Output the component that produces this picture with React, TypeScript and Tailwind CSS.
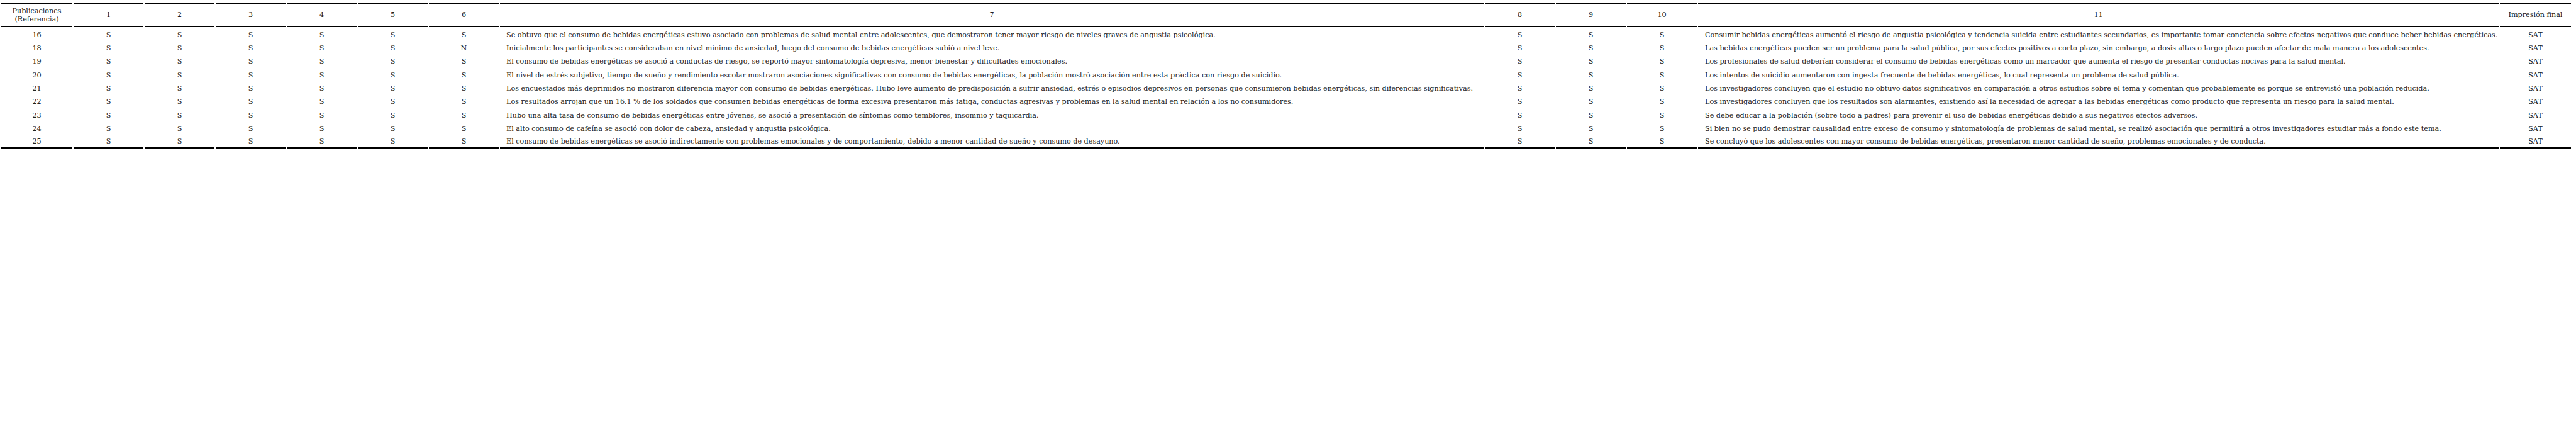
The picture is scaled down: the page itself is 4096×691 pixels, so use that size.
const rows = [
  {
    ref: '16',
    marks: ['S', 'S', 'S', 'S', 'S', 'S'],
    result: 'Se obtuvo que el consumo de bebidas energéticas estuvo asociado con problemas de salud mental entre adolescentes, que demostraron tener mayor riesgo de niveles graves de angustia psicológica.',
    tail: ['S', 'S', 'S'],
    conclusion: 'Consumir bebidas energéticas aumentó el riesgo de angustia psicológica y tendencia suicida entre estudiantes secundarios, es importante tomar conciencia sobre efectos negativos que conduce beber bebidas energéticas.',
  },
  {
    ref: '18',
    marks: ['S', 'S', 'S', 'S', 'S', 'N'],
    result: 'Inicialmente los participantes se consideraban en nivel mínimo de ansiedad, luego del consumo de bebidas energéticas subió a nivel leve.',
    tail: ['S', 'S', 'S'],
    conclusion: 'Las bebidas energéticas pueden ser un problema para la salud pública, por sus efectos positivos a corto plazo, sin embargo, a dosis altas o largo plazo pueden afectar de mala manera a los adolescentes.',
  },
  {
    ref: '19',
    marks: ['S', 'S', 'S', 'S', 'S', 'S'],
    result: 'El consumo de bebidas energéticas se asoció a conductas de riesgo, se reportó mayor sintomatología depresiva, menor bienestar y dificultades emocionales.',
    tail: ['S', 'S', 'S'],
    conclusion: 'Los profesionales de salud deberían considerar el consumo de bebidas energéticas como un marcador que aumenta el riesgo de presentar conductas nocivas para la salud mental.',
  },
  {
    ref: '20',
    marks: ['S', 'S', 'S', 'S', 'S', 'S'],
    result: 'El nivel de estrés subjetivo, tiempo de sueño y rendimiento escolar mostraron asociaciones significativas con consumo de bebidas energéticas, la población mostró asociación entre esta práctica con riesgo de suicidio.',
    tail: ['S', 'S', 'S'],
    conclusion: 'Los intentos de suicidio aumentaron con ingesta frecuente de bebidas energéticas, lo cual representa un problema de salud pública.',
  },
  {
    ref: '21',
    marks: ['S', 'S', 'S', 'S', 'S', 'S'],
    result: 'Los encuestados más deprimidos no mostraron diferencia mayor con consumo de bebidas energéticas. Hubo leve aumento de predisposición a sufrir ansiedad, estrés o episodios depresivos en personas que consumieron bebidas energéticas, sin diferencias significativas.',
    tail: ['S', 'S', 'S'],
    conclusion: 'Los investigadores concluyen que el estudio no obtuvo datos significativos en comparación a otros estudios sobre el tema y comentan que probablemente es porque se entrevistó una población reducida.',
  },
  {
    ref: '22',
    marks: ['S', 'S', 'S', 'S', 'S', 'S'],
    result: 'Los resultados arrojan que un 16.1 % de los soldados que consumen bebidas energéticas de forma excesiva presentaron más fatiga, conductas agresivas y problemas en la salud mental en relación a los no consumidores.',
    tail: ['S', 'S', 'S'],
    conclusion: 'Los investigadores concluyen que los resultados son alarmantes, existiendo así la necesidad de agregar a las bebidas energéticas como producto que representa un riesgo para la salud mental.',
  },
  {
    ref: '23',
    marks: ['S', 'S', 'S', 'S', 'S', 'S'],
    result: 'Hubo una alta tasa de consumo de bebidas energéticas entre jóvenes, se asoció a presentación de síntomas como temblores, insomnio y taquicardia.',
    tail: ['S', 'S', 'S'],
    conclusion: 'Se debe educar a la población (sobre todo a padres) para prevenir el uso de bebidas energéticas debido a sus negativos efectos adversos.',
  },
  {
    ref: '24',
    marks: ['S', 'S', 'S', 'S', 'S', 'S'],
    result: 'El alto consumo de cafeína se asoció con dolor de cabeza, ansiedad y angustia psicológica.',
    tail: ['S', 'S', 'S'],
    conclusion: 'Si bien no se pudo demostrar causalidad entre exceso de consumo y sintomatología de problemas de salud mental, se realizó asociación que permitirá a otros investigadores estudiar más a fondo este tema.',
  },
  {
    ref: '25',
    marks: ['S', 'S', 'S', 'S', 'S', 'S'],
    result: 'El consumo de bebidas energéticas se asoció indirectamente con problemas emocionales y de comportamiento, debido a menor cantidad de sueño y consumo de desayuno.',
    tail: ['S', 'S', 'S'],
    conclusion: 'Se concluyó que los adolescentes con mayor consumo de bebidas energéticas, presentaron menor cantidad de sueño, problemas emocionales y de conducta.',
  },
]

function App() {
  const th = 'border-y-2 border-black font-normal text-center align-middle h-[37.5px] p-0'

  return (
    <div className="w-[4096px] h-[691px] bg-white pt-[5px] pl-[2px] font-['DejaVu_Serif',serif] text-[11.2px] leading-[13px] text-[#222]">
      <table className="table-fixed border-separate border-spacing-x-[2px] border-spacing-y-0 -ml-[2px]">
        <colgroup>
          <col className="w-[113px]" />
          <col className="w-[111px]" />
          <col className="w-[111px]" />
          <col className="w-[111px]" />
          <col className="w-[111px]" />
          <col className="w-[111px]" />
          <col className="w-[111px]" />
          <col className="w-[1564px]" />
          <col className="w-[111px]" />
          <col className="w-[111px]" />
          <col className="w-[111px]" />
          <col className="w-[1273px]" />
          <col className="w-[113px]" />
        </colgroup>
        <thead>
          <tr>
            <th className={th}>Publicaciones<br />(Referencia)</th>
            <th className={th}>1</th>
            <th className={th}>2</th>
            <th className={th}>3</th>
            <th className={th}>4</th>
            <th className={th}>5</th>
            <th className={th}>6</th>
            <th className={th}>7</th>
            <th className={th}>8</th>
            <th className={th}>9</th>
            <th className={th}>10</th>
            <th className={th}>11</th>
            <th className={th}>Impresión final</th>
          </tr>
        </thead>
        <tbody>
          {rows.map((row, i) => {
            const first = i === 0
            const last = i === rows.length - 1
            const cell = joinClasses(
              'p-0 align-middle whitespace-nowrap',
              first ? 'h-[23.5px] pt-[2px]' : 'h-[21.3px]',
              last ? 'border-b-2 border-black' : ''
            )
            return (
              <tr key={row.ref}>
                <td className={cell + ' text-center'}>{row.ref}</td>
                {row.marks.map((m, j) => (
                  <td key={j} className={cell + ' text-center'}>{m}</td>
                ))}
                <td className={cell + ' text-left pl-[10px]'}>{row.result}</td>
                {row.tail.map((m, j) => (
                  <td key={j} className={cell + ' text-center'}>{m}</td>
                ))}
                <td className={cell + ' text-left pl-[11px]'}>{row.conclusion}</td>
                <td className={cell + ' text-center'}>SAT</td>
              </tr>
            )
          })}
        </tbody>
      </table>
    </div>
  )
}

function joinClasses(...parts: string[]) {
  return parts.filter(Boolean).join(' ')
}

export default App
